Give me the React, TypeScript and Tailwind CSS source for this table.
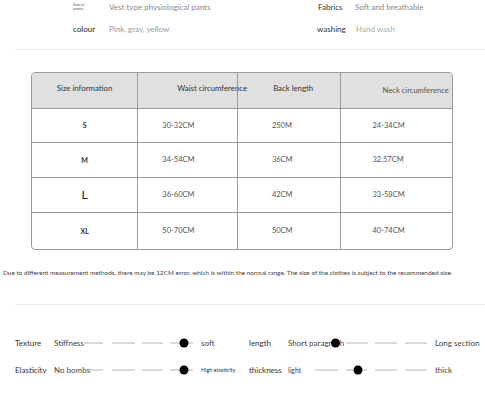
const line = "#b5b5b5";

function Dashes({ w, segs, dots = [] }: { w: number; segs: [number, number][]; dots?: number[] }) {
  return (
    <svg width={w} height={12} viewBox={`0 0 ${w} 12`} className="shrink-0 block">
      {segs.map(([a, b], i) => (
        <line key={i} x1={a} y1={6} x2={b} y2={6} stroke={line} strokeWidth={1} />
      ))}
      {dots.map((d, i) => (
        <circle key={i} cx={d} cy={6} r={4.5} fill="#000" />
      ))}
    </svg>
  );
}

const rows = [
  { size: "S", cls: "text-[7px] font-bold text-[#333]", h: "h-[34px]", a: "30-32CM", b: "250M", c: "24-34CM" },
  { size: "M", cls: "text-[7px] font-bold text-[#333]", h: "h-[35px]", a: "34-54CM", b: "36CM", c: "32.57CM" },
  { size: "L", cls: "text-[12px] text-[#222]", h: "h-[35px]", a: "36-60CM", b: "42CM", c: "33-58CM" },
  { size: "XL", cls: "text-[7px] font-bold text-[#333]", h: "h-[36px]", a: "50-70CM", b: "50CM", c: "40-74CM" },
];

export default function App() {
  return (
    <div className="w-[485px] h-[404px] bg-white overflow-hidden font-['Lato',sans-serif] text-[#444]">
      {/* product info */}
      <div className="ml-[15px] h-[50px] border-b border-[#ebebeb] pl-[58px]">
        <div className="grid grid-cols-[36px_209px_37px_1fr] grid-rows-[14px_14px] gap-y-[8px] items-center">
          <div className="flex flex-col text-[3px] leading-[4px] text-[#555]">
            <span>Name of</span>
            <span>product</span>
          </div>
          <div className="text-[8px] text-[#888] whitespace-nowrap">Vest type physiological pants</div>
          <div className="text-[8px] text-[#333] whitespace-nowrap">Fabrics</div>
          <div className="text-[8px] text-[#888] whitespace-nowrap">Soft and breathable</div>
          <div className="text-[8px] text-[#222] whitespace-nowrap">colour</div>
          <div className="text-[8px] text-[#999] whitespace-nowrap">Pink, gray, yellow</div>
          <div className="text-[8px] text-[#333] whitespace-nowrap -ml-px">washing</div>
          <div className="text-[8px] text-[#aaa] whitespace-nowrap ml-px">Hand wash</div>
        </div>
      </div>

      {/* table */}
      <div className="mt-[22px] ml-[31px] w-[422px] border border-[#9a9a9a] rounded-[4px] overflow-hidden">
        <div className="flex h-[36px] bg-[#e0e0e0] border-b border-[#9a9a9a] text-[7.8px] text-[#333] whitespace-nowrap">
          <div className="w-[106px] flex items-center justify-center pb-[3px]">Size information</div>
          <div className="w-[100px] border-l border-[#9a9a9a] flex items-center pl-[39px] pb-[3px]">Waist circumference</div>
          <div className="w-[103px] border-l border-[#9a9a9a] flex items-center pl-[35px] pb-[3px] relative">Back length</div>
          <div className="w-[113px] border-l border-[#9a9a9a] flex items-center pl-[42px] text-[7.6px] text-[#555]">Neck circumference</div>
        </div>
        {rows.map((r, i) => (
          <div
            key={r.size}
            className={`flex ${r.h} ${i < rows.length - 1 ? "border-b border-[#9a9a9a]" : ""} text-[7.5px] text-[#555] whitespace-nowrap`}
          >
            <div className={`w-[106px] flex items-center justify-center ${r.cls}`}>{r.size}</div>
            <div className="w-[100px] border-l border-[#9a9a9a] flex items-center pl-[24px]">{r.a}</div>
            <div className="w-[103px] border-l border-[#9a9a9a] flex items-center pl-[34px]">{r.b}</div>
            <div className="w-[113px] border-l border-[#9a9a9a] flex items-center pl-[32px]">{r.c}</div>
          </div>
        ))}
      </div>

      {/* note */}
      <div className="mt-[19px] ml-[3px] h-[8px] text-[6.45px] leading-[8px] text-[#444] whitespace-nowrap">
        Due to different measurement methods, there may be 12CM error, which is within the normal range. The size of the clothes is subject to the recommended size.
      </div>

      <div className="mt-[27px] ml-[15px] border-t border-[#ebebeb]" />

      {/* attributes */}
      <div className="mt-[31px] ml-[15px] flex flex-col gap-[13px] text-[8px] whitespace-nowrap">
        <div className="flex items-center h-[14px]">
          <span className="w-[39px] text-[#333]">Texture</span>
          <span className="w-[30px] text-[#444]">Stiffness</span>
          <Dashes w={112} segs={[[0, 19], [28, 51], [58, 79], [86, 96], [104, 109]]} dots={[100]} />
          <span className="ml-[5px] w-[48px] text-[#444]">soft</span>
          <span className="w-[39px] text-[#333]">length</span>
          <span className="w-[58px] relative text-[#444]">
            Short paragraph
            <span className="absolute left-[43px] top-1/2 -translate-y-1/2 w-[9px] h-[9px] rounded-full bg-black" />
          </span>
          <Dashes w={89} segs={[[0, 22], [29, 51], [59, 81]]} />
          <span className="text-[#444]">Long section</span>
        </div>
        <div className="flex items-center h-[14px]">
          <span className="w-[39px] text-[#333]">Elasticity</span>
          <span className="w-[35px] text-[#444]">No bombs</span>
          <Dashes w={107} segs={[[0, 14], [23, 46], [53, 74], [81, 91], [99, 104]]} dots={[95]} />
          <span className="ml-[5px] w-[48px] text-[5.5px] text-[#333]">High elasticity</span>
          <span className="w-[39px] text-[#333]">thickness</span>
          <span className="w-[27px] text-[7px] text-[#444]">light</span>
          <Dashes w={120} segs={[[0, 23], [31, 38], [48, 52], [60, 82], [90, 112]]} dots={[43]} />
          <span className="text-[#444]">thick</span>
        </div>
      </div>
    </div>
  );
}
